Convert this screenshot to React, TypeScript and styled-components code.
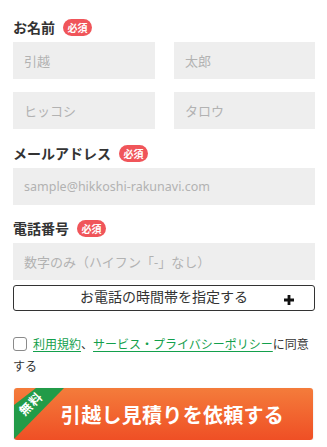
import React from 'react'
import styled, { createGlobalStyle } from 'styled-components'

const GlobalStyle = createGlobalStyle`
    html, body {
        margin: 0;
        padding: 0;
        background: #ffffff;
    }
    body {
        font-family: "Noto Sans", "Noto Sans CJK JP", sans-serif;
        color: #333333;
    }
`

const Form = styled.form`
    width: 327px;
    box-sizing: border-box;
    padding: 19px 12px 0 13px;
    display: flex;
    flex-direction: column;
`

const Field = styled.div<{ $top?: number }>`
    display: flex;
    flex-direction: column;
    margin-top: ${({ $top }) => $top ?? 0}px;
`

const LabelRow = styled.div`
    display: flex;
    align-items: center;
    height: 17px;
    margin-bottom: 6px;
`

const Label = styled.span`
    font-size: 14px;
    font-weight: 700;
    color: #333333;
    line-height: 17px;
`

const Badge = styled.span`
    display: inline-flex;
    align-items: center;
    justify-content: center;
    margin-left: 8px;
    width: 29px;
    height: 17px;
    border-radius: 9px;
    background: #f0555a;
    color: #ffffff;
    font-size: 10px;
    font-weight: 700;
    line-height: 1;
`

const Pair = styled.div`
    display: grid;
    grid-template-columns: 142px 141px;
    column-gap: 19px;
    row-gap: 13px;
`

const Input = styled.input`
    display: block;
    width: 100%;
    height: 37px;
    box-sizing: border-box;
    border: none;
    outline: none;
    background: #eeeeee;
    padding: 0 11px;
    font-family: "Noto Sans", "Noto Sans CJK JP", sans-serif;
    font-size: 13px;
    color: #333333;

    &::placeholder {
        color: #b2b2b2;
    }
`

const EmailInput = styled(Input)`
    font-size: 12.5px;
`

const TimeButton = styled.button`
    display: grid;
    grid-template-columns: 1fr auto 1fr;
    align-items: center;
    margin-top: 5px;
    height: 26px;
    box-sizing: border-box;
    border: 1px solid #333333;
    border-radius: 3px;
    background: #ffffff;
    padding: 0;
    font-family: "Noto Sans", "Noto Sans CJK JP", sans-serif;
    font-size: 14px;
    color: #333333;
    cursor: pointer;

    span {
        grid-column: 2;
        line-height: 22px;
        margin-top: -2px;
    }

    svg {
        grid-column: 3;
        justify-self: end;
        margin-right: 20px;
        margin-top: 4px;
    }
`

const Agree = styled.p`
    margin: 23px 0 0;
    font-size: 12px;
    line-height: 22px;
    color: #333333;
`

const Check = styled.span`
    display: inline-block;
    width: 14px;
    height: 14px;
    box-sizing: border-box;
    border: 1.5px solid #8a8a8a;
    border-radius: 3px;
    background: #ffffff;
    vertical-align: -2px;
    margin-right: 6px;
`

const Link = styled.a`
    color: #13a04c;
    text-decoration: underline;
    text-underline-offset: 2px;
`

const Submit = styled.button`
    position: relative;
    overflow: hidden;
    display: flex;
    align-items: center;
    justify-content: center;
    margin: 10px 2px 0 1px;
    height: 52px;
    border: none;
    border-radius: 3px;
    padding: 0 0 0 18px;
    background: linear-gradient(#f47c3b, #ef4f25);
    box-shadow: 0 1px 2px rgba(0, 0, 0, 0.15);
    color: #ffffff;
    font-family: "Noto Sans", "Noto Sans CJK JP", sans-serif;
    font-size: 20px;
    font-weight: 700;
    letter-spacing: 0.3px;
    cursor: pointer;
`

const Ribbon = styled.span`
    position: absolute;
    left: 0;
    top: 0;
    width: 52px;
    height: 52px;
    background: #229b48;
    clip-path: polygon(22px 0, 50px 0, 0 51px, 0 17px);
`

const RibbonText = styled.span`
    position: absolute;
    left: 4px;
    top: 10px;
    font-size: 12.5px;
    font-weight: 700;
    color: #ffffff;
    transform: rotate(-45deg);
    letter-spacing: 1px;
    line-height: 1;
`

const Plus = () => (
    <svg width='10' height='10' viewBox='0 0 10 10'>
        <path d='M3.6 0h2.8v3.6H10v2.8H6.4V10H3.6V6.4H0V3.6h3.6z' fill='#111111' />
    </svg>
)

const App = () => (
    <>
        <GlobalStyle />
        <Form onSubmit={(e) => e.preventDefault()}>
            <Field>
                <LabelRow>
                    <Label>お名前</Label>
                    <Badge>必須</Badge>
                </LabelRow>
                <Pair>
                    <Input placeholder='引越' />
                    <Input placeholder='太郎' />
                    <Input placeholder='ヒッコシ' />
                    <Input placeholder='タロウ' />
                </Pair>
            </Field>

            <Field $top={16}>
                <LabelRow>
                    <Label>メールアドレス</Label>
                    <Badge>必須</Badge>
                </LabelRow>
                <EmailInput placeholder='sample@hikkoshi-rakunavi.com' />
            </Field>

            <Field $top={15}>
                <LabelRow>
                    <Label>電話番号</Label>
                    <Badge>必須</Badge>
                </LabelRow>
                <Input placeholder='数字のみ（ハイフン「-」なし）' />
            </Field>

            <TimeButton type='button'>
                <span>お電話の時間帯を指定する</span>
                <Plus />
            </TimeButton>

            <Agree>
                <Check />
                <Link href='#'>利用規約</Link>、<Link href='#'>サービス・プライバシーポリシー</Link>に同意する
            </Agree>

            <Submit type='submit'>
                <Ribbon />
                <RibbonText>無料</RibbonText>
                引越し見積りを依頼する
            </Submit>
        </Form>
    </>
)

export default App
